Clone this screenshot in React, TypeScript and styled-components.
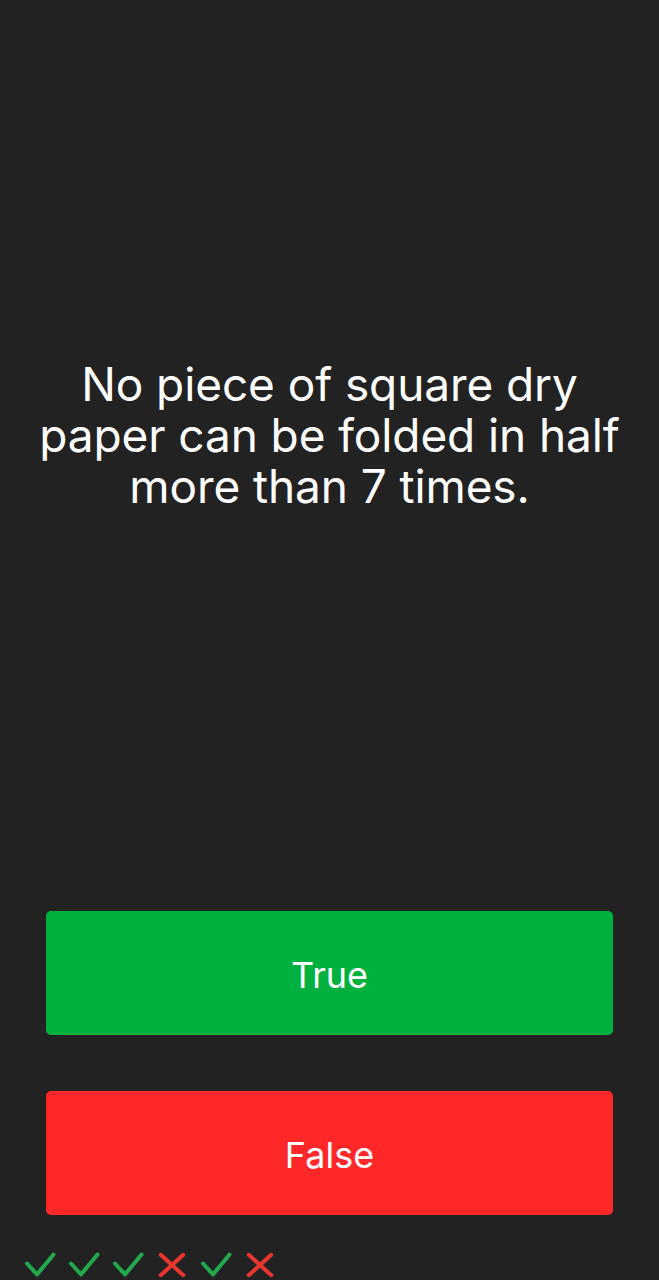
import React from "react";
import styled, { createGlobalStyle } from "styled-components";

const Global = createGlobalStyle`
  html, body { margin: 0; padding: 0; background: #222222; }
  body { font-family: Inter, "Noto Sans", sans-serif; }
`;

const Screen = styled.div`
  height: 1280px;
  display: flex;
  flex-direction: column;
  background: #222222;
`;

const QuestionArea = styled.div`
  flex: 1;
  display: flex;
  align-items: center;
  justify-content: center;
  padding: 0 20px 41px;
`;

const QuestionText = styled.p`
  margin: 0;
  color: #ffffff;
  font-size: 46px;
  line-height: 51px;
  font-weight: 400;
  text-align: center;
  letter-spacing: -0.1px;
`;

const Answers = styled.div`
  display: flex;
  flex-direction: column;
  gap: 56px;
  padding: 0 46px;
`;

const AnswerButton = styled.button<{ $tone: "green" | "red" }>`
  height: 124px;
  border: none;
  border-radius: 5px;
  background: ${(p) => (p.$tone === "green" ? "#00b140" : "#ff2727")};
  color: #ffffff;
  font-family: Inter, "Noto Sans", sans-serif;
  font-size: 36px;
  font-weight: 400;
  display: flex;
  align-items: center;
  justify-content: center;
  padding: 4px 0 0 0;
  cursor: pointer;
`;

const StatusRow = styled.div`
  display: flex;
  gap: 12px;
  padding: 36px 24px 0;
  height: 29px;
`;

const Mark = styled.svg`
  width: 32px;
  height: 28px;
  flex: none;
`;

const Check = () => (
  <Mark viewBox="0 0 32 28">
    <polyline
      points="3,12.5 13,23.5 29.5,3.5"
      fill="none"
      stroke="#22a94d"
      strokeWidth="4"
      strokeLinecap="round"
      strokeLinejoin="round"
    />
  </Mark>
);

const Cross = () => (
  <Mark viewBox="0 0 32 28">
    <g stroke="#e8362f" strokeWidth="4" strokeLinecap="round">
      <line x1="4.75" y1="3.75" x2="27.25" y2="24.25" />
      <line x1="27.25" y1="3.75" x2="4.75" y2="24.25" />
    </g>
  </Mark>
);

const results = [true, true, true, false, true, false];

export default function App() {
  return (
    <>
      <Global />
      <Screen>
        <QuestionArea>
          <QuestionText>
            No piece of square dry
            <br />
            paper can be folded in half
            <br />
            more than 7 times.
          </QuestionText>
        </QuestionArea>
        <Answers>
          <AnswerButton $tone="green">True</AnswerButton>
          <AnswerButton $tone="red">False</AnswerButton>
        </Answers>
        <StatusRow>
          {results.map((r, i) => (r ? <Check key={i} /> : <Cross key={i} />))}
        </StatusRow>
      </Screen>
    </>
  );
}
